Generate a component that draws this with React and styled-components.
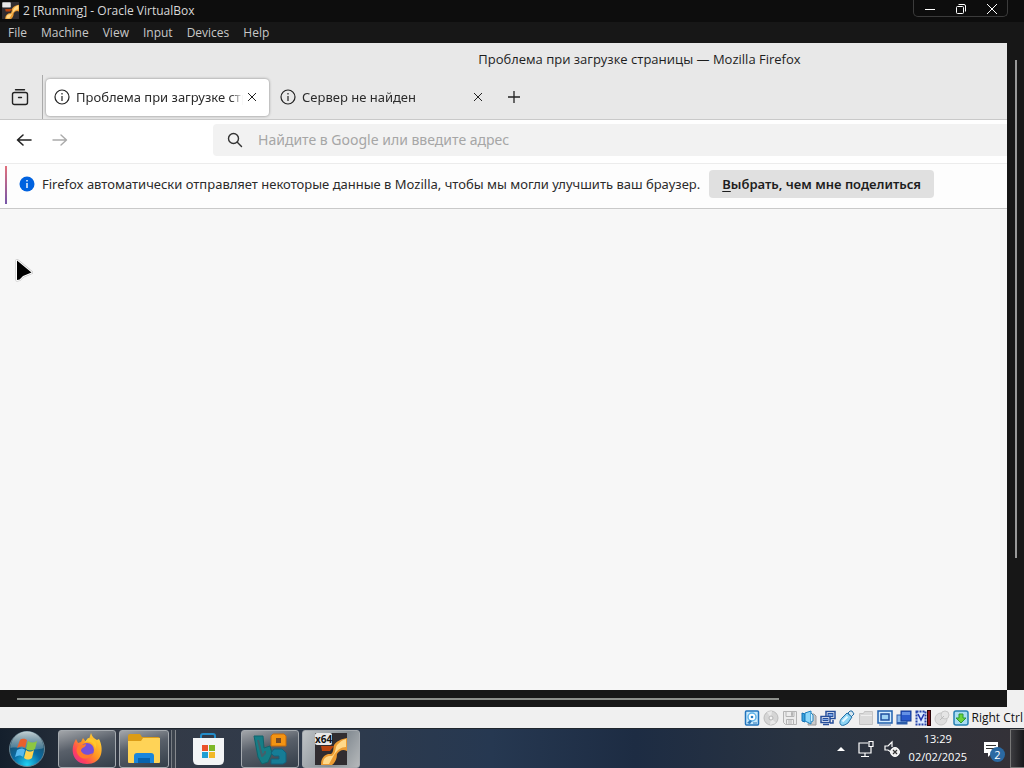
import React from 'react'
import styled, { createGlobalStyle } from 'styled-components'

const menus = ['File', 'Machine', 'View', 'Input', 'Devices', 'Help']

function App() {
    return (
        <>
            <GlobalStyle />
            <Window>
                <TitleBar>
                    <VmArt size={17} />
                    <WindowTitle>2 [Running] - Oracle VirtualBox</WindowTitle>
                    <WindowButtons>
                        <WindowButton aria-label="Minimize">
                            <svg width="12" height="12" viewBox="0 0 12 12"><path d="M1 6.5h10" stroke="#fff" /></svg>
                        </WindowButton>
                        <WindowButton aria-label="Restore">
                            <svg width="12" height="12" viewBox="0 0 12 12" fill="none" stroke="#fff">
                                <rect x="1.5" y="3.5" width="7" height="7" rx="1" />
                                <path d="M3.5 1.5H9A1.5 1.5 0 0 1 10.5 3v5.5" />
                            </svg>
                        </WindowButton>
                        <WindowButton aria-label="Close">
                            <svg width="12" height="12" viewBox="0 0 12 12"><path d="M1 1l10 10M11 1L1 11" stroke="#fff" /></svg>
                        </WindowButton>
                    </WindowButtons>
                </TitleBar>
                <MenuBar>
                    {menus.map((name) => <MenuItem key={name}>{name}</MenuItem>)}
                </MenuBar>

                <Guest>
                    <Browser />
                    <VScroll><VThumb /></VScroll>
                    <HScroll><HThumb /></HScroll>
                    <Corner />
                </Guest>

                <StatusBar />
            </Window>
            <Taskbar />
        </>
    )
}

function Browser() {
    return (
        <Firefox>
            <Chrome>
                <PageTitle>Проблема при загрузке страницы — Mozilla Firefox</PageTitle>
                <TabStrip>
                    <ViewButton aria-label="Firefox View">
                        <svg width="18" height="18" viewBox="0 0 18 18" fill="none" stroke="#222" strokeWidth="1.4" strokeLinecap="round">
                            <path d="M4.5 1.7h9" />
                            <path d="M1.5 7.500V6.500q0-2 2-2h11q2 0 2 2v8q0 2-2 2h-11q-2 0-2-2z" />
                            <path d="M7.5 9.5h3" />
                        </svg>
                    </ViewButton>
                    <Tab $active>
                        <InfoIcon />
                        <TabLabel>Проблема при загрузке страницы</TabLabel>
                        <CloseButton aria-label="Закрыть вкладку"><CloseIcon /></CloseButton>
                    </Tab>
                    <Tab>
                        <InfoIcon />
                        <TabLabel>Сервер не найден</TabLabel>
                        <CloseButton aria-label="Закрыть вкладку"><CloseIcon /></CloseButton>
                    </Tab>
                    <NewTab aria-label="Новая вкладка">
                        <svg width="14" height="14" viewBox="0 0 14 14"><path d="M7 1v12M1 7h12" stroke="#222" strokeWidth="1.3" /></svg>
                    </NewTab>
                </TabStrip>
            </Chrome>
            <NavBar>
                <NavButton aria-label="Назад">
                    <svg width="16" height="16" viewBox="0 0 16 16" fill="none" stroke="#222" strokeWidth="1.6" strokeLinecap="round" strokeLinejoin="round">
                        <path d="M15 8H1.5M7 3L1.5 8 7 13" />
                    </svg>
                </NavButton>
                <NavButton aria-label="Вперёд">
                    <svg width="16" height="16" viewBox="0 0 16 16" fill="none" stroke="#aaa" strokeWidth="1.4" strokeLinecap="round" strokeLinejoin="round">
                        <path d="M1 8h13.5M9 3l5.5 5L9 13" />
                    </svg>
                </NavButton>
                <UrlBar>
                    <svg width="16" height="16" viewBox="0 0 16 16" fill="none" stroke="#333" strokeWidth="1.4" strokeLinecap="round">
                        <circle cx="6.5" cy="6.5" r="5" />
                        <path d="M10.3 10.3L14.5 14.5" />
                    </svg>
                    <UrlInput aria-label="Адрес" placeholder="Найдите в Google или введите адрес" />
                </UrlBar>
            </NavBar>
            <Notice>
                <NoticeStripe />
                <svg width="16" height="16" viewBox="0 0 16 16">
                    <circle cx="8" cy="8" r="7.5" fill="#0062df" />
                    <path d="M8 4v1.5M8 7v5" stroke="#fff" strokeWidth="1.4" />
                </svg>
                <NoticeText>Firefox автоматически отправляет некоторые данные в Mozilla, чтобы мы могли улучшить ваш браузер.</NoticeText>
                <NoticeButton><u>В</u>ыбрать, чем мне поделиться</NoticeButton>
            </Notice>
            <Page>
                <Pointer width="20" height="26" viewBox="0 0 20 26" strokeLinejoin="round">
                    <path d="M2 2.5V22L4.5 21.5 8 18 16.5 14.5Z" stroke="#bbb" strokeWidth="3" />
                    <path d="M2 2.5V22L4.5 21.5 8 18 16.5 14.5Z" stroke="#fff" strokeWidth="2" />
                    <path d="M2 2.5V22L4.5 21.5 8 18 16.5 14.5Z" />
                </Pointer>
            </Page>
        </Firefox>
    )
}

function InfoIcon() {
    return (
        <svg width="16" height="16" viewBox="0 0 16 16" fill="none" stroke="#222" strokeWidth="1.2">
            <circle cx="8" cy="8" r="7" />
            <path d="M8 4v1.5M8 7v5" />
        </svg>
    )
}

function CloseIcon() {
    return <svg width="10" height="10" viewBox="0 0 10 10"><path d="M1 1l8 8M9 1L1 9" stroke="#222" /></svg>
}

function VmArt({ size }) {
    return (
        <svg width={size} height={size} viewBox="0 0 32 32">
            <rect width="32" height="32" fill="#302c30" />
            <path d="M6 13h13l-4 5H7z" fill="#b8430e" />
            <path d="M32 5v13c-4-2-7-1-10 3 0 5-2 9-5 11H6c0-6 2-9 7-11h3c3-2 2-6 3-9 3-4 7-6 13-7z" fill="#eb9b32" />
            <path d="M31 6v8c-5 0-9 3-12 8l-5 9H8c0-5 2-7 6-8h3c4-3 3-8 5-11 3-3 5-5 9-6z" fill="#ffd98a" />
            <rect width="17" height="11" rx="2" fill="#e8e8e8" stroke="#222" />
        </svg>
    )
}

function StatusBar() {
    return (
        <Status>
            {/* hard disk */}
            <svg width="16" height="16" viewBox="0 0 16 16">
                <rect x="1.5" y="1" width="13" height="14" rx="1" fill="#c9e9fb" stroke="#2274bd" strokeWidth="1.5" />
                <circle cx="8" cy="7" r="4" fill="#fff" stroke="#5fb4ea" strokeWidth="1.5" /><circle cx="8" cy="7" r="1.3" fill="#257ec4" />
                <path d="M3 13l3-3 2 1-2 3z" fill="#2b78b8" /><path d="M9 13h4" stroke="#2b78b8" />
            </svg>
            {/* optical */}
            <svg width="16" height="16" viewBox="0 0 16 16">
                <circle cx="8" cy="8" r="7" fill="#d5d5d5" stroke="#bbb" /><path d="M8 8L4 2l5-1zM8 8l5 5-6 2z" fill="#e8e8e8" />
                <circle cx="8" cy="8" r="2" fill="#f5f5f5" stroke="#b5b5b5" />
            </svg>
            {/* floppy */}
            <svg width="16" height="16" viewBox="0 0 16 16" fill="#ececec" stroke="#b4b4b4">
                <path d="M1.5 1.5h13v13h-11l-2-2z" /><path d="M4 1.5h8v5H4zM4.5 9.5h7v5h-7zM6 11h4M6 13h4" /><path d="M9.5 2.5h1v3h-1z" fill="#aaa" />
            </svg>
            {/* audio */}
            <svg width="16" height="16" viewBox="0 0 16 16">
                <path d="M9 4h4l2 2v9H7z" fill="#c8c8c8" stroke="#999" />
                <path d="M1 3l3 1v8l-3-1z" fill="#39a2dd" stroke="#1471b4" /><path d="M4 3l6-2v13l-6-3z" fill="#8ed7f9" stroke="#1b80c1" /><path d="M10 3l2 2v6l-2 1" fill="#d2f0ff" stroke="#2887bd" />
            </svg>
            {/* network */}
            <svg width="16" height="16" viewBox="0 0 16 16" stroke="#264e9a">
                <rect x="6" y="1.5" width="9" height="7" fill="#fff" strokeWidth="1.5" /><rect x="8" y="3.5" width="5" height="3" fill="#7aa9ee" />
                <rect x="1" y="6.5" width="9" height="6" fill="#fff" strokeWidth="1.5" /><rect x="3" y="8.5" width="5" height="2" fill="#7aa9ee" />
                <path d="M3 14.5h6M13 10v3h-3" strokeWidth="1.5" fill="none" />
            </svg>
            {/* usb */}
            <svg width="16" height="16" viewBox="0 0 16 16" stroke="#236ea7" strokeLinejoin="round">
                <path d="M9 3l2-2h2l2 3-3 3z" fill="#d9e8f0" /><path d="M8 3l5 4-4 6c-3 2-5 3-7 2-2-2-1-5 1-7z" fill="#8ed5f4" /><path d="M3.5 11.5l5-5" stroke="#e8f8ff" strokeWidth="2" />
            </svg>
            {/* shared folders */}
            <svg width="16" height="16" viewBox="0 0 16 16" fill="#dadada" stroke="#c4c4c4">
                <path d="M1.5 3.5h4l1-2h8v13h-13z" /><path d="M3 5.5h11" stroke="#eee" />
            </svg>
            {/* display */}
            <svg width="16" height="16" viewBox="0 0 16 16">
                <rect x="1" y="1" width="14" height="12" fill="#d4edff" stroke="#1e5fae" strokeWidth="1.5" />
                <rect x="4" y="4" width="8" height="6" fill="#9fd2f4" stroke="#1e4f9f" strokeWidth="1.5" /><path d="M2 15h12" stroke="#6184bc" />
            </svg>
            {/* recording */}
            <svg width="16" height="16" viewBox="0 0 16 16">
                <rect x="1" y="5" width="10" height="9" fill="#8bb9ea" stroke="#2e5fac" /><rect x="5" y="1" width="10" height="10" fill="#2a5acc" stroke="#153b91" />
                <path d="M1 14h10v-2H1z" fill="#2a5ca9" /><path d="M6 2h8v3H6z" fill="#6591e5" />
            </svg>
            {/* processor load */}
            <svg width="16" height="16" viewBox="0 0 16 16">
                <rect x="1.5" y="1.5" width="9" height="13" fill="#dceaff" stroke="#2644aa" strokeWidth="2" strokeDasharray="2 1" />
                <path d="M3 4l3 6 3-6" fill="none" stroke="#2538ad" strokeWidth="1.6" />
                <path d="M12 0h4v16h-4z" fill="#290407" /><path d="M13 1h2v14h-2z" fill="#8f1418" />
            </svg>
            {/* mouse */}
            <svg width="16" height="16" viewBox="0 0 16 16">
                <circle cx="7" cy="9" r="6" fill="#dedede" stroke="#c8c8c8" /><circle cx="11" cy="5" r="4" fill="#e5e5e5" stroke="#c8c8c8" /><path d="M6 10l4-4" stroke="#bbb" />
            </svg>
            {/* keyboard capture */}
            <svg width="16" height="16" viewBox="0 0 16 16">
                <rect x="1" y="1" width="14" height="14" rx="2" fill="#a9dcf2" stroke="#2580b3" strokeWidth="1.5" />
                <path d="M6 4h4v4h3l-5 5-5-5h3z" fill="#6cd43d" stroke="#2a9a35" />
            </svg>
            <HostKey>Right Ctrl</HostKey>
        </Status>
    )
}

function Taskbar() {
    return (
        <Bar>
            <StartButton aria-label="Start">
                <svg width="38" height="38" viewBox="0 0 38 38">
                    <defs>
                        <radialGradient id="orb" cx="50%" cy="95%" r="90%">
                            <stop offset="0" stopColor="#22d4f5" /><stop offset=".45" stopColor="#096ba3" /><stop offset="1" stopColor="#274351" />
                        </radialGradient>
                        <linearGradient id="gloss" x2="0" y2="1"><stop stopColor="#dce9ed" stopOpacity=".85" /><stop offset="1" stopColor="#a9c3cb" stopOpacity=".3" /></linearGradient>
                    </defs>
                    <circle cx="19" cy="19" r="17.5" fill="url(#orb)" stroke="#688492" />
                    <path d="M2.5 18a16.5 16.5 0 0 1 33 0c-9 4-23-2-33 0z" fill="url(#gloss)" />
                    <path d="M12 10c3-2 5-1 7 0l-2 8c-2-2-5-2-8 0z" fill="#e9602c" />
                    <path d="M20 11c3 2 6 2 9 0l-2 8c-3 2-6 2-9 0z" fill="#8dc641" />
                    <path d="M9 20c3-2 6-2 8 0l-2 7c-2-2-5-2-8 0z" fill="#56b9ef" />
                    <path d="M18 20c3 2 5 2 8 0l-2 8c-3 2-5 2-8 0z" fill="#ffd34d" />
                </svg>
            </StartButton>
            <TaskButton $open aria-label="Firefox">
                <svg width="34" height="34" viewBox="0 0 34 34">
                    <defs><linearGradient id="fox" x1="1" x2="0" y2="1"><stop stopColor="#ffe83d" /><stop offset=".48" stopColor="#ff9421" /><stop offset=".75" stopColor="#ff405e" /><stop offset="1" stopColor="#d72ca0" /></linearGradient></defs>
                    <path d="M6 7l2 4 3-1 2-4 3 4c2 0 3-1 3-3l2-6c1 4 4 6 6 7l2-1c5 9 4 25-12 25C5 32 0 21 4 11z" fill="url(#fox)" />
                    <circle cx="17" cy="18" r="7" fill="#7650d8" />
                    <path d="M8 14l8-2c0 4-5 3-5 7 2 4 7 5 12 2-2 5-9 8-14 3-3-3-3-7-1-10z" fill="#ff7a2c" />
                    <path d="M14 11c5-3 11 0 11 6 4-7-2-11-7-11z" fill="#ffc72c" />
                </svg>
            </TaskButton>
            <TaskGroup>
                <TaskButton $open $narrow aria-label="File Explorer">
                    <svg width="34" height="32" viewBox="0 0 34 32">
                        <path d="M1 3q0-2 2-2h10l2 3h16q2 0 2 2v3H1z" fill="#dc9c16" />
                        <path d="M1 8h13l2-3h17v24q0 1-1 1H2q-1 0-1-1z" fill="#ffd357" />
                        <path d="M7 30v-7q0-3 3-3h14q3 0 3 3v7z" fill="#1a86dc" />
                        <path d="M11 25h12v5H11z" fill="#0863ae" />
                    </svg>
                </TaskButton>
            </TaskGroup>
            <TaskButton aria-label="Microsoft Store">
                <svg width="34" height="34" viewBox="0 0 34 34">
                    <path d="M9 7V4q0-2 2-2h10q2 0 2 2v3" fill="none" stroke="#248cc8" strokeWidth="2" />
                    <path d="M1 6h31v22q0 5-5 5H6q-5 0-5-5z" fill="#f3f5f6" />
                    <path d="M10 13h6v6h-6z" fill="#eb5229" /><path d="M17 13h6v6h-6z" fill="#7db829" />
                    <path d="M10 20h6v6h-6z" fill="#209fd4" /><path d="M17 20h6v6h-6z" fill="#f2b928" />
                </svg>
            </TaskButton>
            <TaskButton $open aria-label="VirtualBox Manager">
                <svg width="34" height="34" viewBox="0 0 34 34" fill="none" strokeLinejoin="round">
                    <path d="M1 4h9l1 12 6-2 2 7-4 9-6 2-4-7z" fill="#157d86" stroke="#11646c" />
                    <path d="M5 8l4 16 3-3v-2" stroke="#43606b" strokeWidth="2" />
                    <path d="M20 2h11l2 2v10H18V4z" fill="#f39413" stroke="#c66a0c" /><path d="M23 6h5v5h-5z" fill="#784b25" />
                    <path d="M18 21l3-4h8l4 4v9l-3 2H18v-5h8v-3h-5z" fill="#167d96" stroke="#12627d" />
                </svg>
            </TaskButton>
            <TaskButton $open $current aria-label="2 [Running] - Oracle VirtualBox">
                <VmTask><VmArt size={32} /><ArchBadge>x64</ArchBadge></VmTask>
            </TaskButton>
            <Tray>
                <TrayButton aria-label="Show hidden icons">
                    <svg width="8" height="8" viewBox="0 0 8 8"><path d="M4 2l4 4H0z" fill="#fff" /></svg>
                </TrayButton>
                <TrayButton aria-label="Network">
                    <svg width="18" height="18" viewBox="0 0 18 18" fill="none" stroke="#fff" strokeWidth="1.2">
                        <path d="M11 3H2v10h12V8M8 13v3M4 16.5h8M12 1.5h4v5h-4zM14 7v3" />
                    </svg>
                </TrayButton>
                <TrayButton aria-label="Volume">
                    <svg width="18" height="18" viewBox="0 0 18 18" fill="none" stroke="#fff">
                        <path d="M8 12L5 10H2V6h3l4-4v5" strokeWidth="1.2" />
                        <circle cx="12" cy="12" r="4.5" fill="#eee" /><path d="M10 10l4 4M14 10l-4 4" stroke="#333" strokeWidth="1.2" />
                    </svg>
                </TrayButton>
                <Clock><span>13:29</span><span>02/02/2025</span></Clock>
                <Messages aria-label="Notifications">
                    <svg width="16" height="16" viewBox="0 0 16 16"><path d="M1 1h14v11H9l-4 4v-4H1z" fill="#fff" /><path d="M3 4.5h10M3 7.5h8" stroke="#333" /></svg>
                    <Badge>2</Badge>
                </Messages>
                <ShowDesktop aria-label="Show desktop" />
            </Tray>
        </Bar>
    )
}

export default App


const uiFont = '"Open Sans", "Noto Sans", sans-serif'
const guestFont = '"Noto Sans", "Open Sans", sans-serif'

const GlobalStyle = createGlobalStyle`
    * { box-sizing: border-box; }
    body { margin: 0; background: #101010; }
    #root {
        min-height: 100vh;
        display: flex;
        flex-direction: column;
    }
    button {
        margin: 0;
        padding: 0;
        border: none;
        background: none;
        font: inherit;
        color: inherit;
    }
    svg { flex-shrink: 0; display: block; }
`
const Window = styled.div`
    flex: 1;
    display: flex;
    flex-direction: column;
    font-family: ${uiFont};
    font-size: 12px;
`
const TitleBar = styled.header`
    display: flex;
    height: 22px;
    align-items: center;
    gap: 4px;
    padding: 0 16px 1px 2px;
    background: #0d0d0d;
    color: #d8d8d8;
`
const WindowTitle = styled.span`
    flex: 1;
`
const WindowButtons = styled.div`
    display: flex;
    align-self: flex-start;
    width: 95px;
    height: 17px;
    border: 1px solid #3b3b3b;
    border-top: none;
    border-radius: 0 0 5px 5px;
`
const WindowButton = styled.button`
    flex: 1;
    display: flex;
    align-items: center;
    justify-content: center;
    padding-top: 2px;
`
const MenuBar = styled.nav`
    display: flex;
    height: 21px;
    padding-left: 1px;
    background: #171717;
    color: #c8c8c8;
`
const MenuItem = styled.button`
    padding: 0 7px;
`
const Guest = styled.main`
    flex: 1;
    display: grid;
    grid-template-columns: minmax(0, 1fr) 17px;
    grid-template-rows: minmax(0, 1fr) 17px;
    background: #171717;
`
const VScroll = styled.div`
    display: flex;
    justify-content: center;
    padding-top: 17px;
`
const VThumb = styled.div`
    width: 2px;
    height: 79%;
    background: #989898;
`
const HScroll = styled.div`
    display: flex;
    align-items: center;
    padding-left: 17px;
`
const HThumb = styled.div`
    width: 77%;
    height: 2px;
    background: #8d908b;
`
const Corner = styled.div`
    background: #f0f0f0;
`
const Firefox = styled.section`
    display: flex;
    flex-direction: column;
    overflow: hidden;
    font-family: ${guestFont};
    font-size: 13px;
    color: #2b2b2b;
    background: #f7f7f7;
`
const Chrome = styled.div`
    background: #e8e8e8;
    border-bottom: 1px solid #c9c9c9;
`
const PageTitle = styled.div`
    width: 127%;
    height: 32px;
    line-height: 32px;
    text-align: center;
    font-family: ${uiFont};
    font-weight: 500;
    color: #1d1d1d;
`
const TabStrip = styled.div`
    display: flex;
    height: 44px;
    align-items: center;
    gap: 3px;
`
const ViewButton = styled.button`
    display: flex;
    align-items: center;
    justify-content: center;
    align-self: stretch;
    width: 43px;
    padding-right: 3px;
    border-right: 1px solid #aaa;
`
const Tab = styled.div`
    display: flex;
    align-items: center;
    width: 223px;
    height: 37px;
    padding: 0 8px;
    gap: 6px;
    border-radius: 4px;
    background: ${(props) => props.$active ? '#fff' : 'transparent'};
    box-shadow: ${(props) => props.$active ? '0 0 3px rgba(0,0,0,.45)' : 'none'};
`
const TabLabel = styled.span`
    flex: 1;
    overflow: hidden;
    white-space: nowrap;
    mask-image: linear-gradient(to left, transparent, #000 12px);
`
const CloseButton = styled.button`
    display: flex;
    padding: 4px;
    margin-left: -6px;
`
const NewTab = styled.button`
    display: flex;
    padding: 9px;
`
const NavBar = styled.div`
    display: flex;
    height: 44px;
    align-items: center;
    gap: 20px;
    padding: 0 0 4px 16px;
    background: #fff;
    border-bottom: 1px solid #ececec;
`
const NavButton = styled.button`
    display: flex;
`
const UrlBar = styled.label`
    flex: 1;
    display: flex;
    align-items: center;
    gap: 15px;
    height: 32px;
    margin-left: 125px;
    padding-left: 14px;
    background: #f2f2f2;
    border-radius: 4px 0 0 4px;
`
const UrlInput = styled.input`
    flex: 1;
    min-width: 0;
    padding: 0;
    border: none;
    outline: none;
    background: none;
    font: 14px ${guestFont};
    color: #2b2b2b;
    &::placeholder {
        color: #a6a6a6;
        opacity: 1;
    }
`
const Notice = styled.div`
    display: flex;
    height: 45px;
    align-items: center;
    padding: 0 5px 4px;
    background: #fdfdfd;
    border-bottom: 1px solid #c9c9c9;
`
const NoticeStripe = styled.div`
    align-self: stretch;
    width: 2px;
    margin: 2px 12px 0 0;
    background: linear-gradient(#e2707c, #7555a8);
`
const NoticeText = styled.span`
    margin: 0 9px 0 7px;
    white-space: nowrap;
`
const NoticeButton = styled.button`
    height: 28px;
    padding: 0 13px;
    border-radius: 4px;
    background: #e0e0e0;
    font-weight: 600;
    white-space: nowrap;
    color: #1d1d1d;
    u { text-underline-offset: 2px; }
`
const Page = styled.div`
    flex: 1;
    position: relative;
    background: #f7f7f7;
`
const Pointer = styled.svg`
    position: absolute;
    left: 15px;
    top: 49px;
`
const Status = styled.footer`
    display: flex;
    height: 21px;
    align-items: center;
    justify-content: flex-end;
    gap: 3px;
    padding-right: 1px;
    background: #f0f0f0;
    color: #111;
`
const HostKey = styled.span`
    font-size: 12px;
`
const Bar = styled.div`
    display: flex;
    align-items: center;
    height: 40px;
    gap: 3px;
    padding-left: 8px;
    border-top: 1px solid #20272e;
    background: linear-gradient(90deg, #141f2c 0, #343a46 12%, #303b4b 30%, #263851 48%, #1d2c43 62%, #293341 78%, #343137 100%);
    font-family: ${uiFont};
    font-size: 12px;
    color: #fff;
`
const StartButton = styled.button`
    margin-right: 9px;
`
const TaskButton = styled.button`
    display: flex;
    align-items: center;
    justify-content: center;
    width: ${(props) => props.$narrow ? 50 : 58}px;
    height: 38px;
    border: 1px solid ${(props) => props.$open ? '#a5aaaf' : 'transparent'};
    border-radius: 3px;
    background: ${(props) => props.$current
        ? 'linear-gradient(120deg, #bfc3c6, #858d94 60%, #b5b8ba)'
        : props.$open ? 'linear-gradient(165deg, #a3a6aa, #59606a 42%, #343e49)' : 'none'};
`
const TaskGroup = styled.div`
    display: flex;
    padding-right: 6px;
    border-right: 1px solid #85888d;
    box-shadow: inset -3px 0 #3d444e, inset -4px 0 #777c82;
    margin-right: 1px;
`
const VmTask = styled.span`
    position: relative;
`
const ArchBadge = styled.span`
    position: absolute;
    left: 0;
    top: 0;
    border-radius: 2px;
    background: #e8e8e8;
    color: #111;
    font-size: 10px;
    line-height: 12px;
    font-weight: 700;
`
const Tray = styled.div`
    display: flex;
    align-items: center;
    height: 100%;
    margin-left: auto;
`
const TrayButton = styled.button`
    display: flex;
    margin-right: 8px;
    &:first-child { margin-right: 12px; }
`
const Clock = styled.time`
    display: flex;
    flex-direction: column;
    align-items: center;
    padding-bottom: 2px;
    line-height: 18px;
    font-size: 11px;
`
const Messages = styled.button`
    position: relative;
    display: flex;
    width: 43px;
    padding-left: 16px;
`
const Badge = styled.span`
    position: absolute;
    left: 23px;
    top: 6px;
    width: 15px;
    height: 15px;
    border-radius: 50%;
    background: #2a69a2;
    font-size: 11px;
    line-height: 15px;
`
const ShowDesktop = styled.button`
    width: 14px;
    height: 100%;
    border: 1px solid #777;
    border-right: none;
    background: linear-gradient(90deg, #3c3c40, #18181b);
`
